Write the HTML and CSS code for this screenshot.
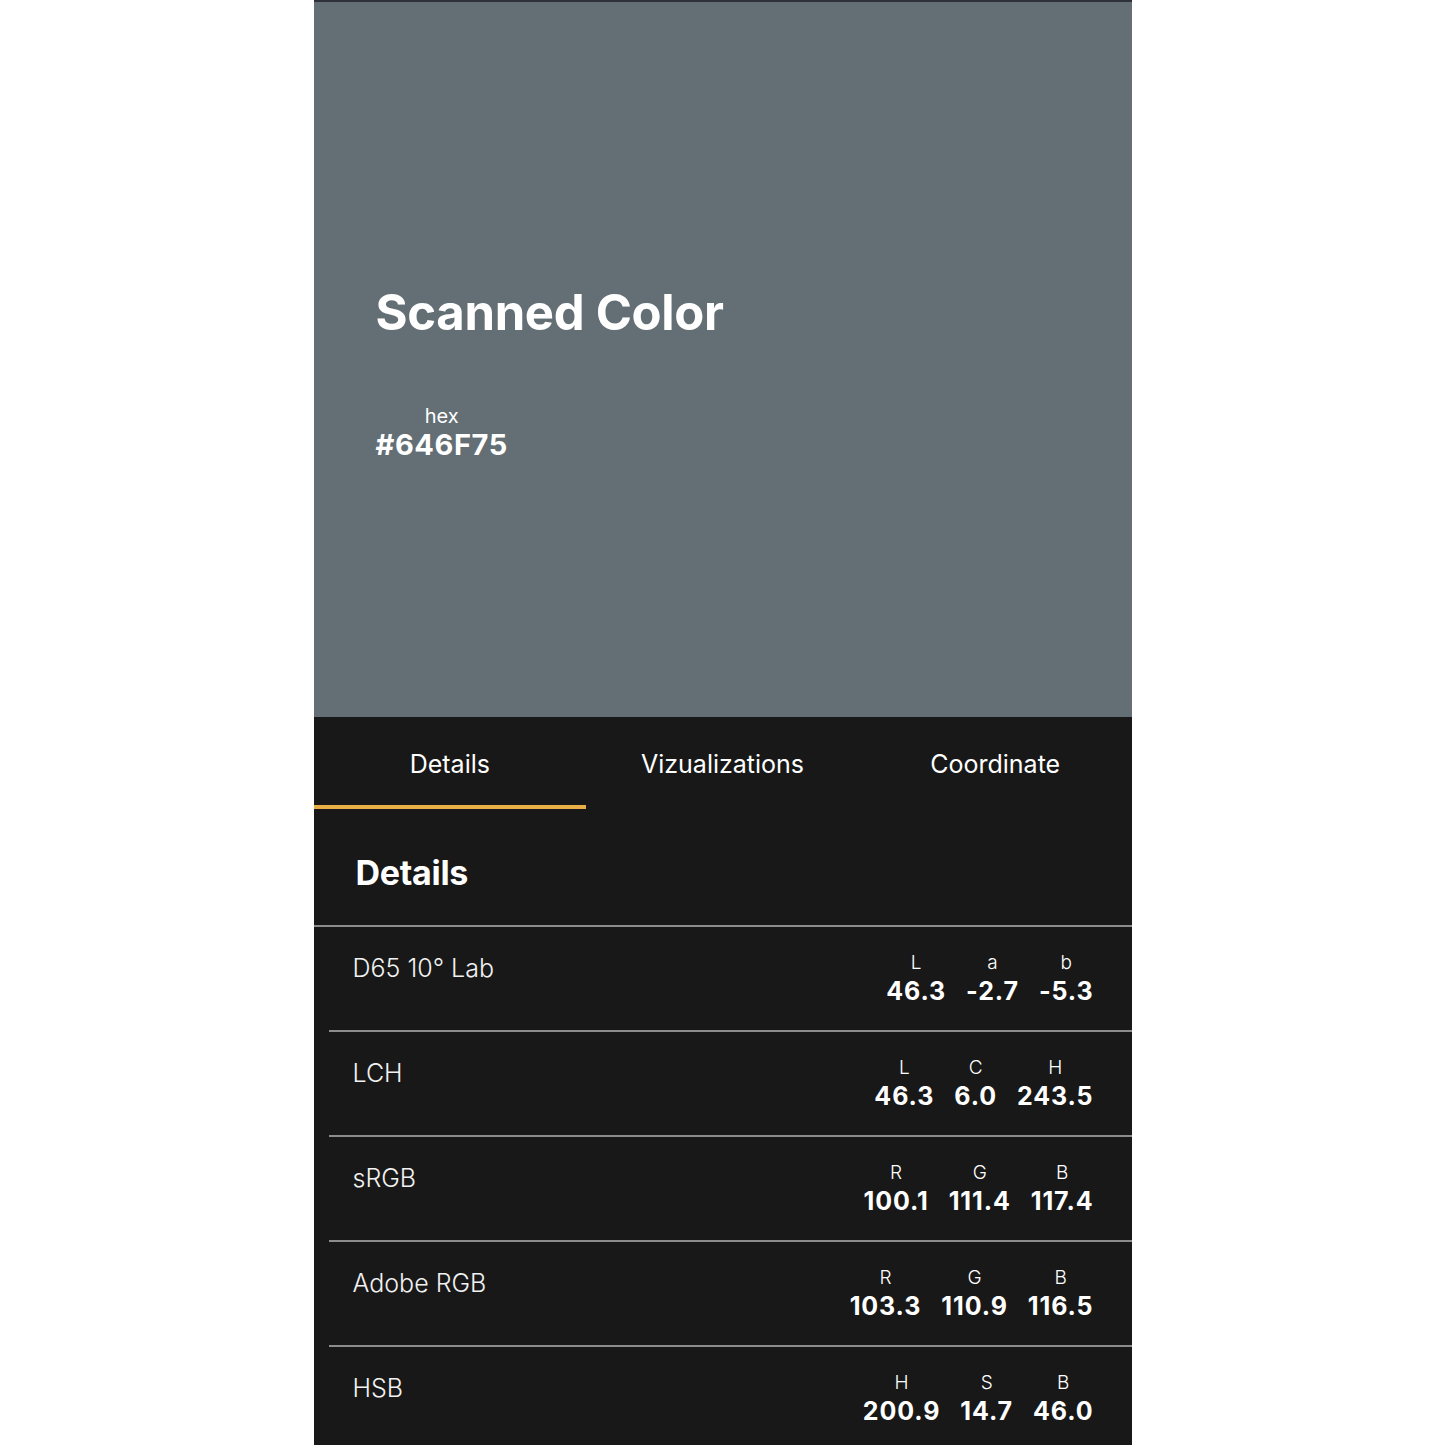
FILE: index.html
```html
<!DOCTYPE html>
<html lang="en">
<head>
    <meta charset="UTF-8">
    <meta name="viewport" content="width=device-width, initial-scale=1.0">
    <title>Scanned Color</title>
    <link rel="stylesheet" href="styles.css">
</head>
<body>
    <div class="phone">
        <div class="swatch">
            <h1>Scanned Color</h1>
            <div class="hex">
                <span class="hex-label">hex</span>
                <span class="hex-value">#646F75</span>
            </div>
        </div>

        <div class="panel">
            <div class="tabs">
                <div class="tab active">Details</div>
                <div class="tab">Vizualizations</div>
                <div class="tab">Coordinate</div>
            </div>

            <h2>Details</h2>

            <div class="row first">
                <div class="row-name">D65 10° Lab</div>
                <div class="values">
                    <div class="val"><span class="key">L</span><span class="num">46.3</span></div>
                    <div class="val"><span class="key">a</span><span class="num">-2.7</span></div>
                    <div class="val"><span class="key">b</span><span class="num">-5.3</span></div>
                </div>
            </div>
            <div class="row">
                <div class="row-name">LCH</div>
                <div class="values">
                    <div class="val"><span class="key">L</span><span class="num">46.3</span></div>
                    <div class="val"><span class="key">C</span><span class="num">6.0</span></div>
                    <div class="val"><span class="key">H</span><span class="num">243.5</span></div>
                </div>
            </div>
            <div class="row">
                <div class="row-name">sRGB</div>
                <div class="values">
                    <div class="val"><span class="key">R</span><span class="num">100.1</span></div>
                    <div class="val"><span class="key">G</span><span class="num">111.4</span></div>
                    <div class="val"><span class="key">B</span><span class="num">117.4</span></div>
                </div>
            </div>
            <div class="row">
                <div class="row-name">Adobe RGB</div>
                <div class="values">
                    <div class="val"><span class="key">R</span><span class="num">103.3</span></div>
                    <div class="val"><span class="key">G</span><span class="num">110.9</span></div>
                    <div class="val"><span class="key">B</span><span class="num">116.5</span></div>
                </div>
            </div>
            <div class="row">
                <div class="row-name">HSB</div>
                <div class="values">
                    <div class="val"><span class="key">H</span><span class="num">200.9</span></div>
                    <div class="val"><span class="key">S</span><span class="num">14.7</span></div>
                    <div class="val"><span class="key">B</span><span class="num">46.0</span></div>
                </div>
            </div>
        </div>
    </div>
</body>
</html>
```

FILE: styles.css
```css
body { margin: 0; background-color: #fff; font-family: Inter, "Noto Sans", sans-serif; color: #fff; }
.phone { width: 818px; height: 1445px; margin: 0 auto; display: flex; flex-direction: column; overflow: hidden; }

.swatch {
    height: 717px;
    background-color: #646f75;
    border-top: 2px solid #2e3238;
    padding: 281px 0 0 62px;
    box-sizing: border-box;
    flex-shrink: 0;
}
.swatch h1 { margin: 0; font-size: 49px; font-weight: 700; letter-spacing: -0.3px; line-height: 60px; }
.hex { display: inline-flex; flex-direction: column; align-items: center; margin-top: 61px; }
.hex-label { font-size: 20px; line-height: 24px; font-weight: 400; }
.hex-value { font-size: 29px; line-height: 34px; font-weight: 700; letter-spacing: 0.6px; }

.panel { flex: 1; background-color: #181818; }

.tabs { display: flex; height: 92px; }
.tab {
    flex: 1;
    display: flex;
    align-items: center;
    justify-content: center;
    padding-top: 6px;
    font-size: 25px;
    font-weight: 400;
    border-bottom: 4px solid transparent;
}
.tab.active { border-bottom-color: #e9ae45; }

h2 { margin: 0; padding: 44px 0 32px 42px; font-size: 34px; font-weight: 700; line-height: 40px; letter-spacing: -0.3px; }

.row {
    display: flex;
    justify-content: space-between;
    height: 105px;
    margin-left: 15px;
    padding: 24px 38px 0 24px;
    border-top: 2px solid #8c8c8c;
    box-sizing: border-box;
    flex-shrink: 0;
}
.row.first { margin-left: 0; padding-left: 39px; }
.row-name { font-size: 25px; font-weight: 300; line-height: 34px; color: #f2f2f2; }

.values { display: flex; gap: 20px; }
.val { display: flex; flex-direction: column; align-items: center; }
.key { font-size: 19px; font-weight: 300; line-height: 24px; }
.num { font-size: 25px; font-weight: 700; line-height: 32px; letter-spacing: 0.9px; }
```
